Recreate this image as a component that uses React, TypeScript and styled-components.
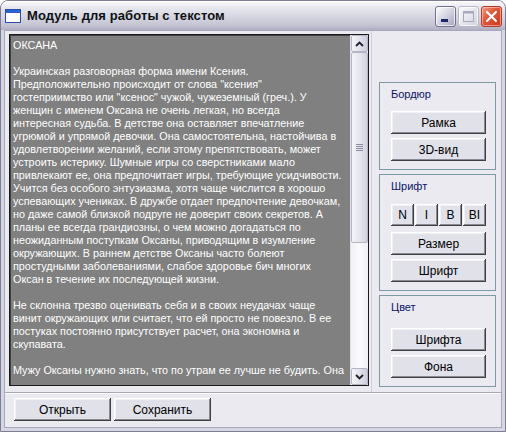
import React from 'react'
import styled, { createGlobalStyle } from 'styled-components'

const GlobalStyle = createGlobalStyle`
  html, body {
    margin: 0;
    padding: 0;
    background: #ffffff;
  }
  body {
    font-family: "Liberation Sans", Arial, sans-serif;
  }
`

const Window = styled.div`
  width: 506px;
  height: 432px;
  box-sizing: border-box;
  display: flex;
  flex-direction: column;
  border-radius: 8px 8px 0 0;
  border: 1px solid #7d7d95;
  background: #d6d6e2;
  overflow: hidden;
`

const TitleBar = styled.div`
  height: 29px;
  flex: none;
  display: flex;
  align-items: center;
  padding: 0 3px 0 4px;
  background: linear-gradient(#fbfbfd 0%, #e6e6ee 25%, #d3d3df 60%, #c2c2d2 85%, #aeaec2 100%);
  box-shadow: inset 0 1px 0 #ffffff;
`

const TitleText = styled.span`
  flex: 1;
  margin-left: 6px;
  font: bold 13px "Liberation Sans", Arial, sans-serif;
  color: #101010;
  letter-spacing: 0.1px;
`

const CaptionButtons = styled.div`
  display: flex;
  gap: 2px;
  padding-top: 1px;
`

const CaptionButton = styled.div<{ $kind: 'min' | 'max' | 'close' }>`
  width: 21px;
  height: 21px;
  box-sizing: border-box;
  border-radius: 3px;
  display: flex;
  align-items: center;
  justify-content: center;
  border: 1px solid ${p => (p.$kind === 'close' ? '#b33a2a' : p.$kind === 'max' ? '#b8b8c8' : '#70708c')};
  background: ${p =>
    p.$kind === 'close'
      ? 'linear-gradient(135deg, #f0a08a 0%, #e05a3c 40%, #c8361c 100%)'
      : p.$kind === 'max'
      ? 'linear-gradient(135deg, #fafafc 0%, #e2e2ea 60%, #d0d0dc 100%)'
      : 'linear-gradient(135deg, #ffffff 0%, #d8d8e4 45%, #a4a4bc 100%)'};
  box-shadow: inset 0 0 0 1px ${p => (p.$kind === 'close' ? 'rgba(255,210,200,0.6)' : 'rgba(255,255,255,0.7)')};
`

const Client = styled.div`
  flex: 1;
  margin: 0 3px 3px 3px;
  background: #eaeaf0;
  border: 1px solid #a8a8ba;
  display: flex;
  flex-direction: column;
  min-height: 0;
`

const MainRow = styled.div`
  flex: 1;
  display: flex;
  min-height: 0;
`

const EditorArea = styled.div`
  padding: 3px 0 5px 4px;
  display: flex;
`

const Editor = styled.div`
  width: 360px;
  height: 352px;
  box-sizing: border-box;
  border: 1px solid #1a1a1a;
  box-shadow: inset 1px 1px 0 #404040;
  display: flex;
  background: #808080;
`

const EditorText = styled.div`
  flex: 1;
  padding: 4px 0 0 3px;
  overflow: hidden;
  color: #ffffff;
  font: 10.8px/13px "Liberation Sans", Arial, sans-serif;
  white-space: pre;
`

const ScrollBar = styled.div`
  width: 17px;
  flex: none;
  display: flex;
  flex-direction: column;
  background: linear-gradient(90deg, #f2f2f6, #fbfbfd 50%, #eeeef4);
  border-left: 1px solid #e0e0e8;
`

const ScrollArrow = styled.div`
  height: 17px;
  box-sizing: border-box;
  border: 1px solid #b4b4c6;
  border-radius: 2px;
  background: linear-gradient(90deg, #f4f4f8, #dedee8 60%, #cfcfdc);
  display: flex;
  align-items: center;
  justify-content: center;
`

const ScrollThumb = styled.div`
  height: 191px;
  box-sizing: border-box;
  border: 1px solid #b4b4c6;
  border-radius: 2px;
  background: linear-gradient(90deg, #f4f4f8, #e2e2ea 60%, #d2d2de);
  display: flex;
  align-items: center;
  justify-content: center;
`

const ScrollTrack = styled.div`
  flex: 1;
`

const Grip = styled.div`
  width: 7px;
  height: 7px;
  background: repeating-linear-gradient(#8c8ca0 0 1px, transparent 1px 2px);
`

const SidePanel = styled.div`
  flex: 1;
  display: flex;
  flex-direction: column;
  justify-content: flex-end;
  gap: 4px;
  padding: 0 5px 5px 7px;
  margin-left: 2px;
  border-left: 1px solid #d0d0dc;
`

const Group = styled.div`
  border: 1px solid #7f9aa2;
  padding: 4px 9px 8px 11px;
  display: flex;
  flex-direction: column;
`

const GroupLabel = styled.div<{ $gap: number }>`
  height: 14px;
  line-height: 14px;
  font-size: 11px;
  color: #0a1466;
  margin-bottom: ${p => p.$gap}px;
`

const ButtonStack = styled.div`
  display: flex;
  flex-direction: column;
  gap: 4px;
`

const StyleRow = styled.div`
  display: grid;
  grid-template-columns: repeat(4, 1fr);
  gap: 1px;
  margin-bottom: 2px;
`

const Button = styled.div<{ $width?: number; $height?: number }>`
  width: ${p => (p.$width ? `${p.$width}px` : 'auto')};
  height: ${p => p.$height ?? 23}px;
  box-sizing: border-box;
  display: flex;
  align-items: center;
  justify-content: center;
  background: #e1e1ea;
  color: #000000;
  font: 12px "Liberation Sans", Arial, sans-serif;
  box-shadow: inset -1px -1px 0 #404040, inset 1px 1px 0 #ffffff, inset -2px -2px 0 #8a8a96, inset 2px 2px 0 #f0f0f6;
`

const BottomBar = styled.div`
  flex: none;
  height: 35px;
  box-sizing: border-box;
  border-top: 1px solid #a8a8b8;
  box-shadow: inset 0 1px 0 #ffffff;
  padding: 5px 0 0 9px;
  display: flex;
  gap: 3px;
`

const WindowIcon = () => (
  <svg width="16" height="14" viewBox="0 0 16 14">
    <rect x="0.5" y="0.5" width="15" height="13" fill="#ffffff" stroke="#2a4ea8" />
    <rect x="1" y="1" width="14" height="3" fill="#2e62d0" />
  </svg>
)

const lines = [
  'ОКСАНА',
  '',
  'Украинская разговорная форма имени Ксения.',
  'Предположительно происходит от слова "ксения"',
  'гостеприимство или "ксенос" чужой, чужеземный (греч.). У',
  'женщин с именем Оксана не очень легкая, но всегда',
  'интересная судьба. В детстве она оставляет впечатление',
  'угрюмой и упрямой девочки. Она самостоятельна, настойчива в',
  'удовлетворении желаний, если этому препятствовать, может',
  'устроить истерику. Шумные игры со сверстниками мало',
  'привлекают ее, она предпочитает игры, требующие усидчивости.',
  'Учится без особого энтузиазма, хотя чаще числится в хорошо',
  'успевающих учениках. В дружбе отдает предпочтение девочкам,',
  'но даже самой близкой подруге не доверит своих секретов. А',
  'планы ее всегда грандиозны, о чем можно догадаться по',
  'неожиданным поступкам Оксаны, приводящим в изумление',
  'окружающих. В раннем детстве Оксаны часто болеют',
  'простудными заболеваниями, слабое здоровье бич многих',
  'Оксан в течение их последующей жизни.',
  '',
  'Не склонна трезво оценивать себя и в своих неудачах чаще',
  'винит окружающих или считает, что ей просто не повезло. В ее',
  'постуках постоянно присутствует расчет, она экономна и',
  'скупавата.',
  '',
  'Мужу Оксаны нужно знать, что по утрам ее лучше не будить. Она',
]

export default function App(): JSX.Element {
  return (
    <>
      <GlobalStyle />
      <Window>
        <TitleBar>
          <WindowIcon />
          <TitleText>Модуль для работы с текстом</TitleText>
          <CaptionButtons>
            <CaptionButton $kind="min">
              <svg width="13" height="13" viewBox="0 0 13 13">
                <rect x="2" y="9" width="7" height="3" fill="#1c2a6a" />
              </svg>
            </CaptionButton>
            <CaptionButton $kind="max">
              <svg width="13" height="13" viewBox="0 0 13 13">
                <rect x="1.5" y="1.5" width="10" height="10" fill="none" stroke="#a8a8bc" />
                <rect x="1.5" y="1.5" width="10" height="2" fill="#a8a8bc" />
              </svg>
            </CaptionButton>
            <CaptionButton $kind="close">
              <svg width="13" height="13" viewBox="0 0 13 13">
                <path d="M2 2 L11 11 M11 2 L2 11" stroke="#ffffff" strokeWidth="2.2" strokeLinecap="round" />
              </svg>
            </CaptionButton>
          </CaptionButtons>
        </TitleBar>
        <Client>
          <MainRow>
            <EditorArea>
              <Editor>
                <EditorText>{lines.join('\n')}</EditorText>
                <ScrollBar>
                  <ScrollArrow>
                    <svg width="9" height="6" viewBox="0 0 9 6">
                      <path d="M1 5 L4.5 1.5 L8 5" fill="none" stroke="#20202a" strokeWidth="1.8" />
                    </svg>
                  </ScrollArrow>
                  <ScrollThumb>
                    <Grip />
                  </ScrollThumb>
                  <ScrollTrack />
                  <ScrollArrow>
                    <svg width="9" height="6" viewBox="0 0 9 6">
                      <path d="M1 1 L4.5 4.5 L8 1" fill="none" stroke="#20202a" strokeWidth="1.8" />
                    </svg>
                  </ScrollArrow>
                </ScrollBar>
              </Editor>
            </EditorArea>
            <SidePanel>
              <Group>
                <GroupLabel $gap={10}>Бордюр</GroupLabel>
                <ButtonStack>
                  <Button>Рамка</Button>
                  <Button>3D-вид</Button>
                </ButtonStack>
              </Group>
              <Group>
                <GroupLabel $gap={11}>Шрифт</GroupLabel>
                <ButtonStack>
                  <StyleRow>
                    <Button $height={22}>N</Button>
                    <Button $height={22}>I</Button>
                    <Button $height={22}>B</Button>
                    <Button $height={22}>BI</Button>
                  </StyleRow>
                  <Button>Размер</Button>
                  <Button>Шрифт</Button>
                </ButtonStack>
              </Group>
              <Group>
                <GroupLabel $gap={14}>Цвет</GroupLabel>
                <ButtonStack>
                  <Button>Шрифта</Button>
                  <Button>Фона</Button>
                </ButtonStack>
              </Group>
            </SidePanel>
          </MainRow>
          <BottomBar>
            <Button $width={97}>Открыть</Button>
            <Button $width={97}>Сохранить</Button>
          </BottomBar>
        </Client>
      </Window>
    </>
  )
}
